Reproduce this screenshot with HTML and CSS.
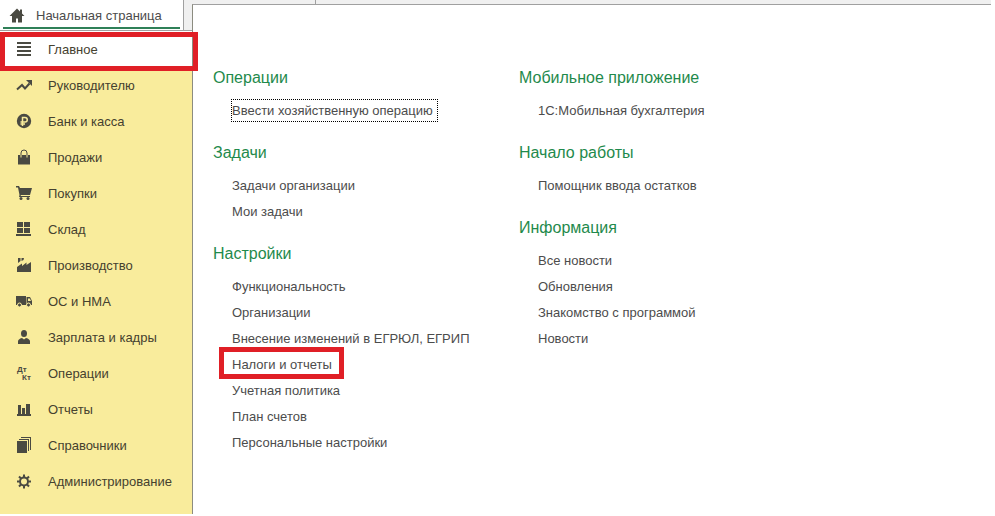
FILE: index.html
```html
<!DOCTYPE html>
<html lang="ru">
<head>
	<meta charset="UTF-8">
	<meta name="viewport" content="width=device-width, initial-scale=1">
	<title>Начальная страница</title>
	<link rel="stylesheet" href="styles.css">
</head>

<body>
	<div class="app">
		<div class="side">
			<div class="side-top">
				<a href="#" class="home">
					<svg class="icon" viewBox="0 0 16 16"><path d="M8 1.500 0.500 9H3v6.500h4v-4h2v4h4V9h2.500L13 6.500V2.500h-2v2z"/></svg>
					<span>Начальная страница</span>
				</a>
			</div>

			<nav class="menu">
				<a href="#" class="menu-item menu-item-active marked">
					<svg class="icon" viewBox="0 0 16 16"><path d="M1 1h14v2H1zM1 5h14v2H1zM1 9h14v2H1zM1 13h14v2H1z"/></svg>
					<span>Главное</span>
				</a>
				<a href="#" class="menu-item">
					<svg class="icon" viewBox="0 0 16 16"><path class="line" d="M1 12.500 6 8l3 3.500 4.500-5"/><path d="M10 3h6v6z"/></svg>
					<span>Руководителю</span>
				</a>
				<a href="#" class="menu-item">
					<svg class="icon" viewBox="0 0 16 16"><circle cx="8" cy="8" r="7.200"/><path class="cut bold" d="M6.500 13V4.500H9a2.200 2.200 0 0 1 0 4.500H4.500M4.500 11H9"/></svg>
					<span>Банк и касса</span>
				</a>
				<a href="#" class="menu-item">
					<svg class="icon" viewBox="0 0 16 16"><path d="M2 6h12v9.500H2z"/><path class="thin" d="M5 7V4a3 3 0 0 1 6 0v3"/><path class="cut" d="M5 6v2.500M11 6v2.500"/></svg>
					<span>Продажи</span>
				</a>
				<a href="#" class="menu-item">
					<svg class="icon" viewBox="0 0 16 16"><path d="M0 1h3l1 2h12l-2 7H5l-.5 1H14v1H3l.5-2L2 2.500H0z"/><circle cx="5" cy="13.500" r="1.500"/><circle cx="12" cy="13.500" r="1.500"/></svg>
					<span>Покупки</span>
				</a>
				<a href="#" class="menu-item">
					<svg class="icon" viewBox="0 0 16 16"><path d="M1 1h6v5H1zM8 1h6v5H8zM1 7h6v5H1zM8 7h6v5H8zM0 13h15v2H0z"/></svg>
					<span>Склад</span>
				</a>
				<a href="#" class="menu-item">
					<svg class="icon" viewBox="0 0 16 16"><path d="M1 15V10l5-3.500V9l4.500-3.500V8L15 5v10zM2 1h2.500v3L2 6zM5.500 1H8l-.5 2-2 1z"/></svg>
					<span>Производство</span>
				</a>
				<a href="#" class="menu-item">
					<svg class="icon" viewBox="0 0 16 16"><path fill-rule="evenodd" d="M0 3h10v9H0zM10.500 4H14l2 4v4h-5.500zM12 5.500V8h3l-1.200-2.500z"/><circle class="hole" cx="3.500" cy="12" r="2"/><circle class="hole" cx="12.500" cy="12" r="2"/></svg>
					<span>ОС и НМА</span>
				</a>
				<a href="#" class="menu-item">
					<svg class="icon" viewBox="0 0 16 16"><ellipse cx="8" cy="4.500" rx="3" ry="3.500"/><path d="M2 15v-2.500Q2 10 6 9l2 1.500L10 9q4 1 4 3.500V15z"/></svg>
					<span>Зарплата и кадры</span>
				</a>
				<a href="#" class="menu-item">
					<svg class="icon" viewBox="0 0 16 16"><text x="1" y="7">Дт</text><text x="6" y="15">Кт</text></svg>
					<span>Операции</span>
				</a>
				<a href="#" class="menu-item">
					<svg class="icon" viewBox="0 0 16 16"><path d="M1 13h14v2H1zM2 4h3v10H2zM6 7h3v7H6zM10 3h4v11h-4z"/></svg>
					<span>Отчеты</span>
				</a>
				<a href="#" class="menu-item">
					<svg class="icon" viewBox="0 0 16 16"><path d="M1 4h10v12H1zM3 2h10v12h-1V3H3zM5 0h10v13h-1V1H5z"/></svg>
					<span>Справочники</span>
				</a>
				<a href="#" class="menu-item">
					<svg class="icon" viewBox="0 0 16 16"><circle class="line" cx="8" cy="8.500" r="4"/><path class="line" d="M8 1.500V4M8 13v2.500M1 8.500h2.500M12.500 8.500H15M3 3.500l2 2M11 11.500l2 2M13 3.500l-2 2M5 11.500l-2 2"/></svg>
					<span>Администрирование</span>
				</a>
			</nav>
		</div>

		<div class="work">
			<div class="tabs">
				<div class="tab"></div>
			</div>

			<main class="panel">
				<div class="column">
					<section class="group">
						<h2>Операции</h2>
						<ul>
							<li><a href="#" class="focused">Ввести хозяйственную операцию</a></li>
						</ul>
					</section>
					<section class="group">
						<h2>Задачи</h2>
						<ul>
							<li><a href="#">Задачи организации</a></li>
							<li><a href="#">Мои задачи</a></li>
						</ul>
					</section>
					<section class="group">
						<h2>Настройки</h2>
						<ul>
							<li><a href="#">Функциональность</a></li>
							<li><a href="#">Организации</a></li>
							<li><a href="#">Внесение изменений в ЕГРЮЛ, ЕГРИП</a></li>
							<li><a href="#" class="marked">Налоги и отчеты</a></li>
							<li><a href="#">Учетная политика</a></li>
							<li><a href="#">План счетов</a></li>
							<li><a href="#">Персональные настройки</a></li>
						</ul>
					</section>
				</div>

				<div class="column">
					<section class="group">
						<h2>Мобильное приложение</h2>
						<ul>
							<li><a href="#">1С:Мобильная бухгалтерия</a></li>
						</ul>
					</section>
					<section class="group">
						<h2>Начало работы</h2>
						<ul>
							<li><a href="#">Помощник ввода остатков</a></li>
						</ul>
					</section>
					<section class="group">
						<h2>Информация</h2>
						<ul>
							<li><a href="#">Все новости</a></li>
							<li><a href="#">Обновления</a></li>
							<li><a href="#">Знакомство с программой</a></li>
							<li><a href="#">Новости</a></li>
						</ul>
					</section>
				</div>
			</main>
		</div>
	</div>
</body>
</html>
```

FILE: styles.css
```css
* {
	box-sizing: border-box;
}

body {
	margin: 0;
	background: #fff;
	color: #4c4c4c;
	font-size: 13px;
	font-family: "Liberation Sans", Arial, sans-serif;
}

a {
	color: inherit;
	text-decoration: none;
}

.app {
	display: flex;
	min-height: 100vh;
	padding: 0 4px 2px 0;
}

/* левая панель разделов */
.side {
	display: flex;
	flex-direction: column;
	flex: none;
	width: 192px;
}

.side-top {
	height: 31px;
	padding-right: 8px;
	background: #f0f0f0;
	border-bottom: 1px solid #a0a0a0;
}

.home {
	position: relative;
	display: flex;
	align-items: center;
	gap: 11px;
	height: 30px;
	padding-left: 9px;
	background: #fff;
	border-right: 1px solid #a0a0a0;
}

.home::after {
	content: "";
	position: absolute;
	left: 3px;
	right: 3px;
	bottom: 1px;
	height: 2px;
	background: #2f8058;
}

.menu {
	flex: 1;
	background: #f9ec9c;
}

.menu-item {
	display: flex;
	align-items: center;
	gap: 16px;
	height: 36px;
	padding-left: 16px;
	color: #45412f;
}

.menu-item-active {
	background: #fff;
}

.icon {
	flex: none;
	width: 16px;
	height: 16px;
	fill: #4a4a42;
}

.icon text {
	font-size: 8px;
	font-weight: bold;
}

.icon .line,
.icon .thin,
.icon .cut {
	fill: none;
	stroke: #4a4a42;
	stroke-width: 2;
}

.icon .thin,
.icon .cut {
	stroke-width: 1;
}

.icon .cut {
	stroke: #f9ec9c;
}

.icon .bold {
	stroke-width: 1.5;
}

.icon .hole {
	stroke: #f9ec9c;
}

/* рабочая область */
.work {
	display: flex;
	flex-direction: column;
	flex: 1;
}

.tabs {
	height: 4px;
	background: #f0f0f0;
}

.tab {
	width: 124px;
	height: 4px;
	border-right: 1px solid #a0a0a0;
}

.panel {
	display: flex;
	flex: 1;
	gap: 40px;
	padding: 63px 20px 20px;
	border-top: 1px solid #a0a0a0;
	border-left: 1px solid #8c8c80;
}

.column {
	flex: none;
	min-width: 266px;
}

.group {
	margin-bottom: 19px;
}

.group h2 {
	margin: 0 0 10px;
	color: #1f8a4c;
	font-size: 16px;
	font-weight: normal;
	line-height: 20px;
}

.group ul {
	margin: 0;
	padding: 0 0 0 19px;
	list-style: none;
}

.group li {
	line-height: 26px;
}

.focused {
	padding: 3px 4px 3px 0;
	outline: 1px dotted #000;
}

/* красная рамка вокруг нужного пункта */
.marked {
	position: relative;
}

.marked::after {
	content: "";
	position: absolute;
	top: -10px;
	right: -12px;
	bottom: -7px;
	left: -13px;
	border: 5px solid #e01f26;
}

.menu-item.marked::after {
	top: 1px;
	right: -6px;
	bottom: -4px;
	left: 0;
}
```
